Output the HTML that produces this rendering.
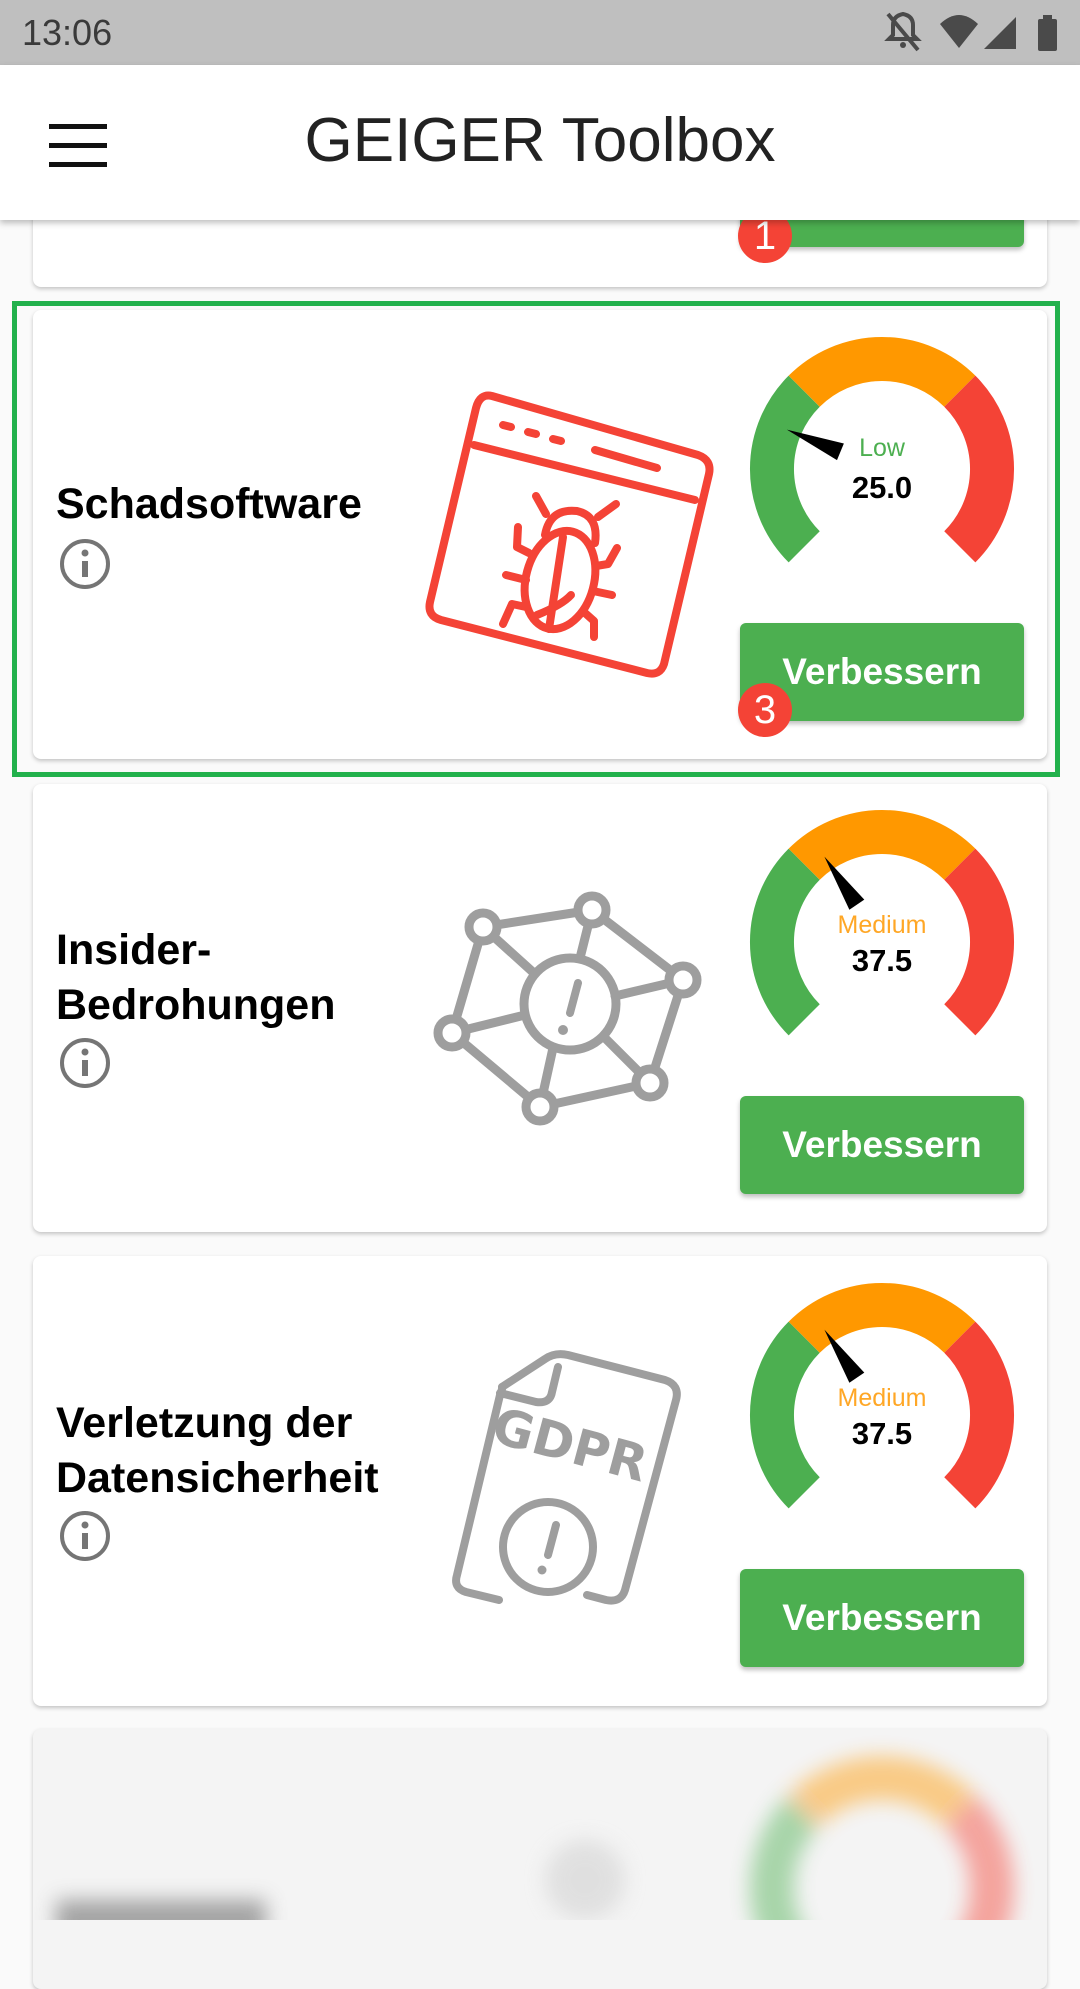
<!DOCTYPE html>
<html><head><meta charset="utf-8">
<style>
*{margin:0;padding:0;box-sizing:border-box}
body{width:1080px;height:1920px;background:#fafafa;font-family:"Liberation Sans",sans-serif;position:relative;overflow:hidden}
.status{position:absolute;left:0;top:0;width:1080px;height:65px;background:#bfbfbf}
.status .t{position:absolute;left:22px;top:12px;font-size:36px;color:#3a3a3a}
.appbar{position:absolute;left:0;top:65px;width:1080px;height:155px;background:#fff;box-shadow:0 3px 6px rgba(0,0,0,.25);z-index:5}
.appbar .title{position:absolute;left:0;width:1080px;top:40px;text-align:center;font-size:62px;color:#222}
.card{position:absolute;left:33px;width:1014px;background:#fff;border-radius:8px;box-shadow:0 2px 4px rgba(0,0,0,.22)}
.name{position:absolute;left:56px;font-size:43px;font-weight:bold;color:#000;line-height:55px}
.btn{position:absolute;left:740px;width:284px;height:98px;background:#4caf50;border-radius:6px;color:#fff;font-size:37px;font-weight:bold;text-align:center;line-height:98px;box-shadow:0 3px 5px rgba(0,0,0,.25)}
.badge{position:absolute;width:54px;height:54px;border-radius:27px;background:#f44336;color:#fff;font-size:40px;text-align:center;line-height:54px}
svg{position:absolute;left:0;top:0}
</style></head><body>
<div class="status"><span class="t">13:06</span>
<svg width="1080" height="65">
<g fill="#4a4a4a" stroke="#4a4a4a">
<path d="M893 25 q0-9 10-11 q10 2 10 11 v10 l4 4 h-28 l4-4z" fill="none" stroke-width="4"/>
<line x1="888" y1="14" x2="918" y2="50" stroke-width="4"/>
<circle cx="903" cy="45" r="3" stroke="none"/>
<path d="M940 24 q19-18 38 0 l-19 24z" stroke="none"/>
<path d="M1016 17 v32 h-32z" stroke="none"/>
<rect x="1038" y="19" width="19" height="32" rx="2" stroke="none"/>
<rect x="1043" y="15" width="9" height="5" stroke="none"/>
</g></svg>
</div>
<div class="appbar">
<svg width="120" height="155"><g fill="#111"><rect x="49" y="59" width="58" height="5"/><rect x="49" y="78" width="58" height="5"/><rect x="49" y="97" width="58" height="5"/></g></svg>
<div class="title">GEIGER Toolbox</div>
</div>

<div class="card" style="top:150px;height:137px"></div>
<div class="btn" style="top:150px;height:97px"></div>
<div class="badge" style="left:738px;top:209px;z-index:1">1</div>

<div style="position:absolute;left:12px;top:301px;width:1048px;height:476px;border:5px solid #22b14c"></div>

<div class="card" style="top:310px;height:449px"></div>
<div class="name" style="top:477px">Schadsoftware</div>
<div class="btn" style="top:623px">Verbessern</div>
<div class="badge" style="left:738px;top:683px">3</div>

<div class="card" style="top:784px;height:448px"></div>
<div class="name" style="top:923px">Insider-<br>Bedrohungen</div>
<div class="btn" style="top:1096px">Verbessern</div>

<div class="card" style="top:1256px;height:450px"></div>
<div class="name" style="top:1396px">Verletzung der<br>Datensicherheit</div>
<div class="btn" style="top:1569px">Verbessern</div>

<div class="card" style="top:1729px;height:260px;background:#f4f4f4"></div>

<svg width="1080" height="1920" style="pointer-events:none">
<defs><filter id="bl" x="-50%" y="-50%" width="200%" height="200%"><feGaussianBlur stdDeviation="10"/></filter></defs>
<g fill="none" stroke="#757575" stroke-width="4">
<circle cx="85" cy="564" r="23"/><circle cx="85" cy="1063" r="23"/><circle cx="85" cy="1536" r="23"/>
</g>
<g fill="#757575">
<rect x="82" y="561" width="6" height="16"/><circle cx="85" cy="553" r="3.5"/>
<rect x="82" y="1060" width="6" height="16"/><circle cx="85" cy="1052" r="3.5"/>
<rect x="82" y="1533" width="6" height="16"/><circle cx="85" cy="1525" r="3.5"/>
</g>

<g transform="translate(882,469)" fill="none" stroke-width="44">
<path d="M-77.8 77.8 A110 110 0 0 1 -77.8 -77.8" stroke="#4caf50"/>
<path d="M-77.8 -77.8 A110 110 0 0 1 77.8 -77.8" stroke="#ff9800"/>
<path d="M77.8 -77.8 A110 110 0 0 1 77.8 77.8" stroke="#f44336"/>
<polygon points="0,-103 -9,-45 9,-45" fill="#000" stroke="none" transform="rotate(-67.5)"/>
<text x="0" y="-13" text-anchor="middle" font-size="25" fill="#4caf50" stroke="none" font-family="Liberation Sans">Low</text>
<text x="0" y="29" text-anchor="middle" font-size="31" fill="#000" stroke="none" font-family="Liberation Sans" font-weight="bold">25.0</text>
</g>
<g transform="translate(882,942)" fill="none" stroke-width="44">
<path d="M-77.8 77.8 A110 110 0 0 1 -77.8 -77.8" stroke="#4caf50"/>
<path d="M-77.8 -77.8 A110 110 0 0 1 77.8 -77.8" stroke="#ff9800"/>
<path d="M77.8 -77.8 A110 110 0 0 1 77.8 77.8" stroke="#f44336"/>
<text x="0" y="-9" text-anchor="middle" font-size="25" fill="#ffa726" stroke="none" font-family="Liberation Sans">Medium</text>
<polygon points="0,-103 -9,-45 9,-45" fill="#000" stroke="none" transform="rotate(-34)"/>
<text x="0" y="29" text-anchor="middle" font-size="31" fill="#000" stroke="none" font-family="Liberation Sans" font-weight="bold">37.5</text>
</g>
<g transform="translate(882,1415)" fill="none" stroke-width="44">
<path d="M-77.8 77.8 A110 110 0 0 1 -77.8 -77.8" stroke="#4caf50"/>
<path d="M-77.8 -77.8 A110 110 0 0 1 77.8 -77.8" stroke="#ff9800"/>
<path d="M77.8 -77.8 A110 110 0 0 1 77.8 77.8" stroke="#f44336"/>
<text x="0" y="-9" text-anchor="middle" font-size="25" fill="#ffa726" stroke="none" font-family="Liberation Sans">Medium</text>
<polygon points="0,-103 -9,-45 9,-45" fill="#000" stroke="none" transform="rotate(-34)"/>
<text x="0" y="29" text-anchor="middle" font-size="31" fill="#000" stroke="none" font-family="Liberation Sans" font-weight="bold">37.5</text>
</g>
<g transform="translate(882,1888)" fill="none" stroke-width="44" filter="url(#bl)" opacity="0.45">
<path d="M-77.8 77.8 A110 110 0 0 1 -77.8 -77.8" stroke="#4caf50"/>
<path d="M-77.8 -77.8 A110 110 0 0 1 77.8 -77.8" stroke="#ff9800"/>
<path d="M77.8 -77.8 A110 110 0 0 1 77.8 77.8" stroke="#f44336"/>
</g>
<g filter="url(#bl)" opacity="0.5">
<rect x="56" y="1900" width="210" height="40" fill="#555"/>
<circle cx="585" cy="1880" r="40" fill="#ccc"/>
</g>

<g fill="none" stroke="#f44336" stroke-width="8" stroke-linecap="round" stroke-linejoin="round">
<path d="M492 396 L698 455 Q712 460 709 474 L664 664 Q660 676 647 673 L441 620 Q427 616 430 602 L476 408 Q480 393 492 396Z"/>
<path d="M474 445 L695 500"/>
<path d="M503 425 l8 2 M528 432 l8 2 M553 439 l8 2 M595 450 l62 18"/>
<ellipse cx="560" cy="580" rx="34" ry="50" transform="rotate(15 560 580)"/>
<path d="M545 535 q5-27 32-24 q22 5 18 32"/>
<path d="M563 537 l-14 92 M537 615 q25-10 34-20"/>
<path d="M546 514 l-10-18 M598 517 l18-13"/>
<path d="M529 553 l-12-6 l1-20 M526 580 l-20-5 M526 607 l-14-3 l-9 20"/>
<path d="M596 566 l12-2 l9-16 M593 591 l19 4 M585 613 l9 8 v16"/>
</g>

<g fill="none" stroke="#9e9e9e" stroke-width="9" stroke-linecap="round">
<circle cx="570" cy="1004" r="46"/>
<line x1="483" y1="927" x2="592" y2="910"/><line x1="592" y1="910" x2="683" y2="980"/>
<line x1="683" y1="980" x2="650" y2="1083"/><line x1="650" y1="1083" x2="540" y2="1107"/>
<line x1="540" y1="1107" x2="452" y2="1033"/><line x1="452" y1="1033" x2="483" y2="927"/>
<line x1="483" y1="927" x2="535" y2="974"/><line x1="592" y1="910" x2="580" y2="958"/>
<line x1="683" y1="980" x2="615" y2="996"/><line x1="650" y1="1083" x2="604" y2="1037"/>
<line x1="540" y1="1107" x2="553" y2="1048"/><line x1="452" y1="1033" x2="525" y2="1015"/>
</g>
<g fill="#fff" stroke="#9e9e9e" stroke-width="9">
<circle cx="483" cy="927" r="14"/><circle cx="592" cy="910" r="14"/><circle cx="683" cy="980" r="14"/>
<circle cx="650" cy="1083" r="14"/><circle cx="540" cy="1107" r="14"/><circle cx="452" cy="1033" r="14"/>
</g>
<path d="M578 983 l-8 30" stroke="#9e9e9e" stroke-width="8" stroke-linecap="round"/>
<circle cx="563" cy="1030" r="5" fill="#9e9e9e"/>

<g fill="none" stroke="#9e9e9e" stroke-width="8" stroke-linecap="round" stroke-linejoin="round">
<path d="M502 1387 L545 1359 Q555 1352 568 1355 L665 1380 Q680 1385 676 1400 L625 1590 Q621 1603 606 1600 L587 1595"/>
<path d="M499 1600 L466 1592 Q453 1588 457 1575 L500 1395 Q503 1387 502 1387"/>
<path d="M500 1393 L536 1402 Q550 1404 552 1392 L558 1367"/>
<circle cx="548" cy="1547" r="45"/>
<path d="M556 1525 l-8 30"/>
</g>
<circle cx="542" cy="1570" r="4.5" fill="#9e9e9e"/>
<text x="570" y="1462" text-anchor="middle" font-size="50" font-weight="bold" fill="#9e9e9e" font-family="DejaVu Sans" transform="rotate(15 570 1445)">GDPR</text>
</svg>
</body></html>
